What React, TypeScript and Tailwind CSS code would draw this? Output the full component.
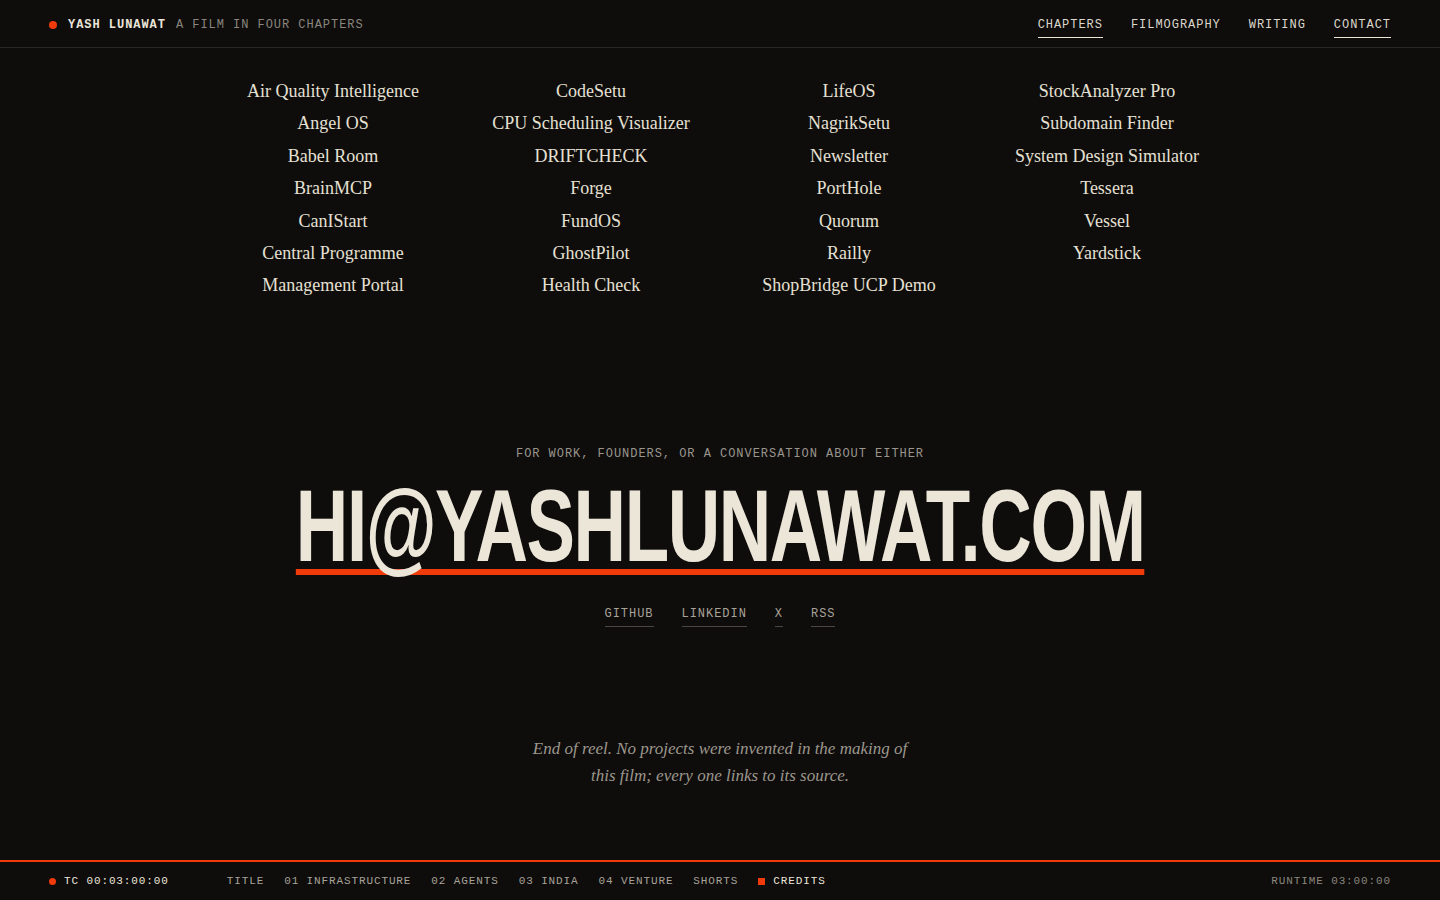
import React from 'react';

const mono = { fontFamily: '"Liberation Mono", "DejaVu Sans Mono", monospace' };
const serif = { fontFamily: '"Liberation Serif", "DejaVu Serif", serif' };

const columns: string[][] = [
  ['Air Quality Intelligence', 'Angel OS', 'Babel Room', 'BrainMCP', 'CanIStart', 'Central Programme Management Portal'],
  ['CodeSetu', 'CPU Scheduling Visualizer', 'DRIFTCHECK', 'Forge', 'FundOS', 'GhostPilot', 'Health Check'],
  ['LifeOS', 'NagrikSetu', 'Newsletter', 'PortHole', 'Quorum', 'Railly', 'ShopBridge UCP Demo'],
  ['StockAnalyzer Pro', 'Subdomain Finder', 'System Design Simulator', 'Tessera', 'Vessel', 'Yardstick'],
];

const navLinks = [
  { label: 'CHAPTERS', active: true },
  { label: 'FILMOGRAPHY', active: false },
  { label: 'WRITING', active: false },
  { label: 'CONTACT', active: true },
];

const reel = ['TITLE', '01 INFRASTRUCTURE', '02 AGENTS', '03 INDIA', '04 VENTURE', 'SHORTS'];

export default function App() {
  return (
    <div className="h-screen flex flex-col bg-[#0e0d0c] text-[#ebe5d8] overflow-hidden">
      <header className="h-[48px] shrink-0 flex items-center justify-between px-[49px] border-b border-[#2a2826]" style={mono}>
        <div className="flex items-center pt-[2px] text-[12px] tracking-[0.08em]">
          <span className="w-[8px] h-[8px] rounded-full bg-[#f03a0a] mr-[11px]" />
          <span className="font-bold text-[#ebe5d8]">YASH LUNAWAT</span>
          <span className="ml-[10px] text-[#8a857d]">A FILM IN FOUR CHAPTERS</span>
        </div>
        <nav className="flex items-center gap-[28px] text-[12px] tracking-[0.08em] text-[#ddd7cb]">
          {navLinks.map((l) => (
            <a
              key={l.label}
              className={`pt-[7px] pb-[3px] border-b ${l.active ? 'border-[#ebe5d8]' : 'border-transparent'}`}
            >
              {l.label}
            </a>
          ))}
        </nav>
      </header>

      <main className="flex-1 flex flex-col items-center">
        <div className="grid grid-cols-4 w-[1032px] pt-[27px]" style={serif}>
          {columns.map((col, i) => (
            <ul key={i} className="flex flex-col items-center text-center text-[18px] leading-[32.4px] text-[#e6e0d3]">
              {col.map((p) => (
                <li key={p} className="max-w-[225px]">{p}</li>
              ))}
            </ul>
          ))}
        </div>

        <p className="mt-[144px] text-[12px] leading-[16px] tracking-[0.08em] text-[#9a958c]" style={mono}>
          FOR WORK, FOUNDERS, OR A CONVERSATION ABOUT EITHER
        </p>

        <div className="mt-[21px] flex justify-center w-full">
          <a
            className="inline-block whitespace-nowrap font-bold text-[102px] leading-[86px] tracking-[-0.02em] text-[#ece6d9] border-b-[6px] border-[#f03a0a] scale-x-[0.713]"
            style={{ fontFamily: '"Liberation Sans", Arial, sans-serif' }}
          >
            HI@YASHLUNAWAT.COM
          </a>
        </div>

        <div className="mt-[31px] flex items-center gap-[28px] text-[12px] leading-[16px] tracking-[0.08em] text-[#a8a298]" style={mono}>
          {['GITHUB', 'LINKEDIN', 'X', 'RSS'].map((s) => (
            <a key={s} className="pb-[4px] border-b border-[#4a4743]">{s}</a>
          ))}
        </div>

        <p className="mt-[108px] w-[390px] text-center italic text-[17px] leading-[27px] text-[#9d978d]" style={serif}>
          End of reel. No projects were invented in the making of this film; every one links to its source.
        </p>
      </main>

      <footer className="h-[40px] shrink-0 flex items-center px-[49px] border-t-2 border-[#f03a0a] text-[11px] tracking-[0.08em]" style={mono}>
        <span className="w-[7px] h-[7px] rounded-full bg-[#f03a0a] mr-[8px]" />
        <span className="text-[#ebe5d8]">TC 00:03:00:00</span>
        <div className="ml-[58px] flex items-center gap-[20px] text-[#a8a298]">
          {reel.map((r) => (
            <span key={r}>{r}</span>
          ))}
          <span className="flex items-center text-[#ebe5d8]">
            <span className="w-[7px] h-[7px] bg-[#f03a0a] mr-[8px]" />
            CREDITS
          </span>
        </div>
        <span className="ml-auto text-[#8a857d]">RUNTIME 03:00:00</span>
      </footer>
    </div>
  );
}
